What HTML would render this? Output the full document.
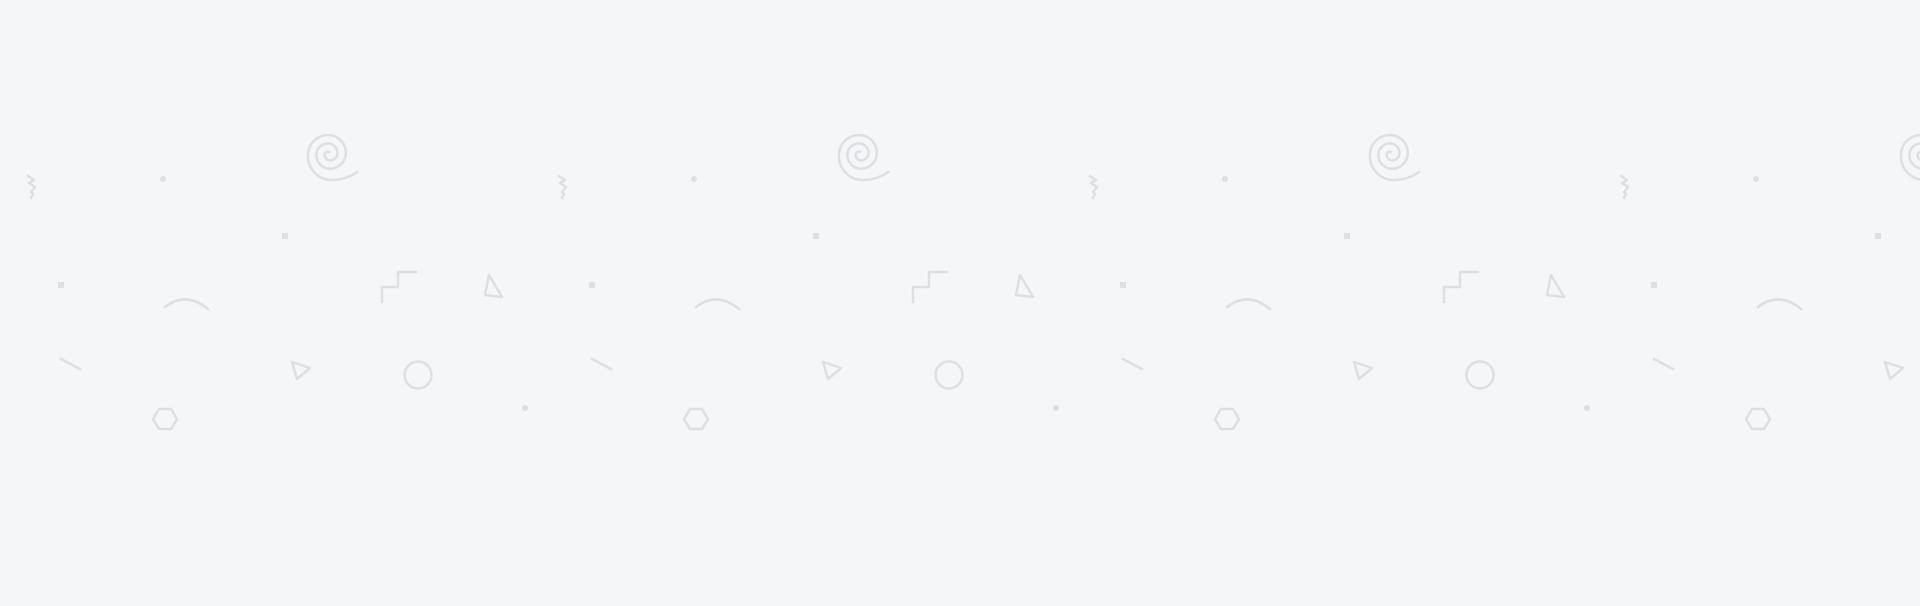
<!DOCTYPE html>
<html><head><style>
html,body{margin:0;padding:0;background:#f4f6f8;width:1920px;height:606px;overflow:hidden}
svg{display:block}
</style></head><body>
<svg width="1920" height="606" xmlns="http://www.w3.org/2000/svg">
<defs>
<pattern id="p" x="0" y="0" width="531" height="606" patternUnits="userSpaceOnUse">
<g fill="none" stroke="#dcdfe3" stroke-width="2.5" stroke-linecap="square" stroke-linejoin="round">
<path d="M28,176 l6,4 l-5,3 l6,4 l-4,5 l2,2 l-2,4"/>
<path transform="translate(1,2)" d="M328,149.9 A3.2,3.2 0 0 0 323.8,152 A5.3,5.3 0 0 0 328,158.3 A7.4,7.4 0 0 0 336.4,152 A9.5,9.5 0 0 0 328,141.5 A11.6,11.6 0 0 0 315.4,152 A13.7,13.7 0 0 0 328,166.7 A15.8,15.8 0 0 0 344.8,152 A17.9,17.9 0 0 0 328,133 A20,20 0 0 0 307,152 A24,24 0 0 0 330,178 Q345,178 356,170"/>
<path d="M165,307 Q186,291 208,309"/>
<path d="M382,302 L382,287 L398,287 L398,272 L416,272"/>
<path d="M489,275 L502,297 L485,295 Z"/>
<path d="M61,359 L80,369"/>
<path d="M292,362 L310,368 L297,379 Z"/>
<circle cx="418" cy="375" r="13.5"/>
<path d="M159,409 L171,409 L177,419 L171,429 L159,429 L153,419 Z"/>
</g>
<g fill="#dcdfe3">
<circle cx="163" cy="179" r="3"/>
<rect x="282" y="233" width="6" height="6"/>
<rect x="58" y="282" width="6" height="6"/>
<circle cx="525" cy="408" r="3"/>
</g>
</pattern>
</defs>
<rect width="1920" height="606" fill="#f4f6f8"/>
<rect width="1920" height="606" fill="url(#p)"/>
</svg>
</body></html>
